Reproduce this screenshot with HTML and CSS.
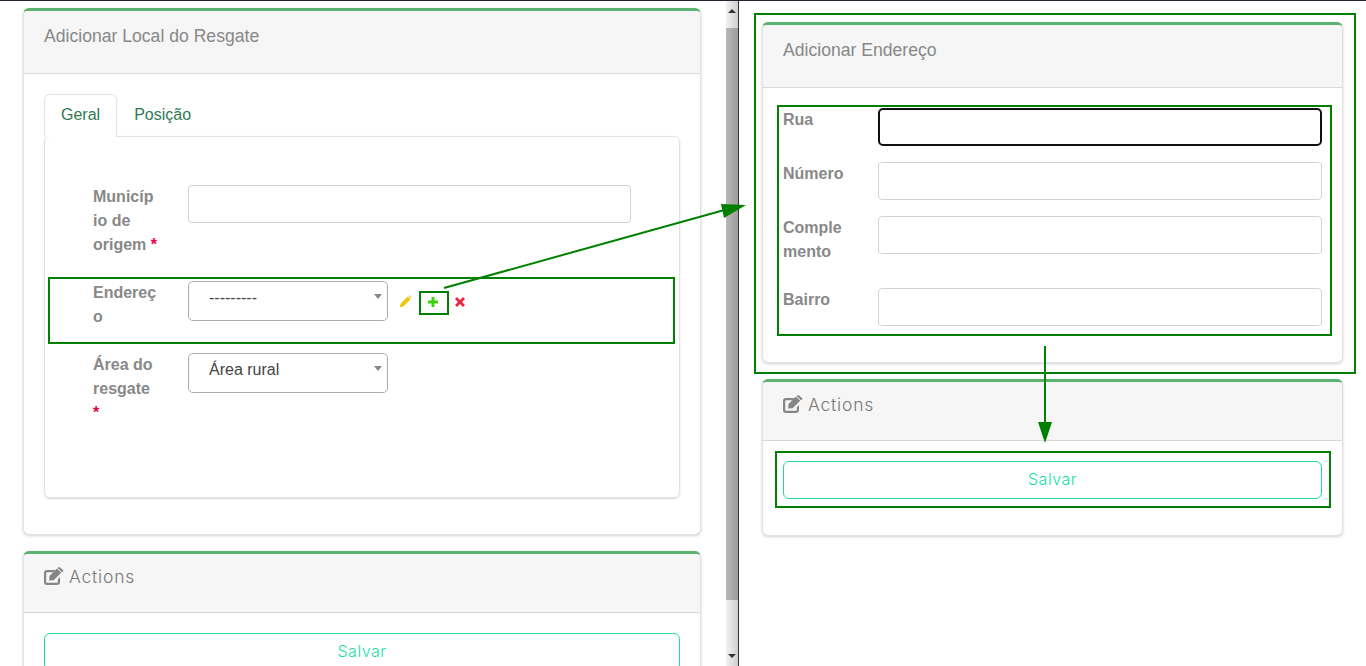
FILE: index.html

```html
<!DOCTYPE html>
<html lang="pt-BR">
<head>
    <meta charset="UTF-8">
    <title>Adicionar Local do Resgate</title>
    <link rel="stylesheet" href="styles.css">
</head>
<body>
    <div class="page">
        <div class="pane-left">
            <div class="left-content">
                <section class="card">
                    <div class="card-header card-header-big"><h3>Adicionar Local do Resgate</h3></div>
                    <div class="card-body">
                        <ul class="tabs">
                            <li class="tab active">Geral</li>
                            <li class="tab">Posição</li>
                        </ul>
                        <div class="tab-content">
                            <div class="form-row">
                                <label>Município de origem <span class="req">*</span></label>
                                <input type="text" class="field">
                            </div>
                            <div class="form-row">
                                <label>Endereço</label>
                                <div class="select-line">
                                    <div class="select"><span>---------</span><i class="caret"></i></div>
                                    <div class="row-icons">
                                        <svg class="icon-pencil" viewBox="0 0 14 14"><path d="M.8 13.200l.9-3.900L9.400 1.600l3 3-7.700 7.700zM10.300.8a1 1 0 0 1 1.400 0l1.500 1.500a1 1 0 0 1 0 1.400l-.2.100-2.900-2.900z" fill="#e8c80c"/></svg>
                                        <svg class="icon-plus" viewBox="0 0 12 12"><path d="M4.500 1h3v3.500H11v3H7.500V11h-3V7.500H1v-3h3.500z" fill="#3fd20a"/></svg>
                                        <svg class="icon-times" viewBox="0 0 12 12"><path d="M3 1l3 3 3-3 2 2-3 3 3 3-2 2-3-3-3 3-2-2 3-3-3-3z" fill="#e8263f"/></svg>
                                    </div>
                                </div>
                            </div>
                            <div class="form-row">
                                <label>Área do resgate <span class="req">*</span></label>
                                <div class="select"><span>Área rural</span><i class="caret"></i></div>
                            </div>
                        </div>
                    </div>
                </section>
                <section class="card">
                    <div class="card-header card-header-small">
                        <svg class="icon-edit" viewBox="0 0 20 18"><path d="M11.500 3H3A3 3 0 0 0 0 6v9a3 3 0 0 0 3 3h10a3 3 0 0 0 3-3v-5l-2.200 2.200V15a.8.8 0 0 1-.8.8H3a.8.8 0 0 1-.8-.8V6a.8.8 0 0 1 .8-.8h6.300z" fill="#858585"/><path d="M5.500 9L13 1.500l4.200 4.200L9.700 13.200l-4.500.4zM14.300.5a1.200 1.200 0 0 1 1.700 0L18.900 3a1.200 1.200 0 0 1 0 1.700L18 5.300 13.700 1z" fill="#858585"/></svg>
                        <h4>Actions</h4>
                    </div>
                    <div class="card-body">
                        <button class="save">Salvar</button>
                    </div>
                </section>
            </div>
            <div class="scrollbar">
                <i class="arrow-up"></i>
                <div class="thumb"></div>
                <i class="arrow-down"></i>
            </div>
        </div>

        <div class="pane-right">
            <section class="card">
                <div class="card-header card-header-big"><h3>Adicionar Endereço</h3></div>
                <div class="card-body card-body-form">
                    <div class="form-row">
                        <label>Rua</label>
                        <input type="text" class="field focused">
                    </div>
                    <div class="form-row">
                        <label>Número</label>
                        <input type="text" class="field">
                    </div>
                    <div class="form-row">
                        <label>Complemento</label>
                        <input type="text" class="field">
                    </div>
                    <div class="form-row">
                        <label>Bairro</label>
                        <input type="text" class="field">
                    </div>
                </div>
            </section>
            <section class="card">
                <div class="card-header card-header-small">
                    <svg class="icon-edit" viewBox="0 0 20 18"><path d="M11.500 3H3A3 3 0 0 0 0 6v9a3 3 0 0 0 3 3h10a3 3 0 0 0 3-3v-5l-2.200 2.200V15a.8.8 0 0 1-.8.8H3a.8.8 0 0 1-.8-.8V6a.8.8 0 0 1 .8-.8h6.300z" fill="#858585"/><path d="M5.500 9L13 1.500l4.200 4.200L9.700 13.200l-4.500.4zM14.300.5a1.200 1.200 0 0 1 1.700 0L18.900 3a1.200 1.200 0 0 1 0 1.700L18 5.300 13.700 1z" fill="#858585"/></svg>
                    <h4>Actions</h4>
                </div>
                <div class="card-body">
                    <button class="save">Salvar</button>
                </div>
            </section>
        </div>

        <!-- green marks drawn over the screenshot -->
        <svg class="marks" viewBox="0 0 1366 666">
            <g fill="none" stroke="#008000" stroke-width="2">
                <rect x="49" y="278" width="625" height="65"/>
                <rect x="420" y="292" width="28" height="22"/>
                <rect x="755" y="14" width="600" height="359"/>
                <rect x="778" y="106" width="553" height="229"/>
                <rect x="776" y="452" width="554" height="55"/>
                <path d="M444 288L728 209"/>
                <path d="M1045 346V424"/>
            </g>
            <path d="M746 205L724 218L721 204z" fill="#008000"/>
            <path d="M1045 443L1038 422H1052z" fill="#008000"/>
        </svg>
    </div>
</body>
</html>
```

FILE: styles.css

```css
* {
    box-sizing: border-box;
}

html, body {
    margin: 0;
    height: 100%;
    overflow: hidden;
    background: #fff;
}

body {
    font-family: "Liberation Sans", Arial, sans-serif;
    font-size: 16px;
    color: #444;
}

.page {
    position: relative;
    display: flex;
    height: 666px;
    border-top: 1px solid #1f2430;
}

/* left side */
.pane-left {
    display: flex;
    width: 739px;
    flex-shrink: 0;
    border-right: 1px solid #333;
    overflow: hidden;
}

.left-content {
    width: 726px;
    flex-shrink: 0;
    padding: 7px 25px 0 23px;
}

.scrollbar {
    display: flex;
    flex-direction: column;
    align-items: center;
    width: 12px;
    background: linear-gradient(to right, #f2f2f2, #cfcfcf);
}

.thumb {
    width: 100%;
    height: 572px;
    background: linear-gradient(to right, #b8b8b8, #9c9c9c);
}

.arrow-up, .arrow-down {
    width: 0;
    height: 0;
    border-left: 4px solid transparent;
    border-right: 4px solid transparent;
}

.arrow-up {
    border-bottom: 4px solid #333;
    margin: 8px 0 15px;
}

.arrow-down {
    border-top: 4px solid #333;
    margin-top: 54px;
}

/* right side */
.pane-right {
    flex-grow: 1;
    padding: 21px 23px 0 23px;
}

/* cards */
.card {
    background: #fff;
    border: 1px solid #e2e2e2;
    border-top: 3px solid #5cb270;
    border-radius: 6px;
    box-shadow: 0 1px 3px rgba(0, 0, 0, 0.18);
    margin-bottom: 16px;
}

.card-header {
    display: flex;
    align-items: flex-start;
    background: #f6f6f6;
    border-bottom: 1px solid #d9d9d9;
    padding: 0 20px;
    border-radius: 3px 3px 0 0;
}

.card-header-big {
    height: 63px;
}

.card-header-small {
    height: 59px;
    align-items: center;
    padding-bottom: 14px;
}

.card-header h3 {
    margin: 14px 0 0;
    font-size: 17.6px;
    font-weight: normal;
    line-height: 22px;
    color: #888;
}

.card-header h4 {
    margin: 0;
    font-family: Inter, sans-serif;
    font-size: 17.5px;
    font-weight: 300;
    letter-spacing: 0.8px;
    color: #777;
}

.icon-edit {
    width: 20px;
    height: 18px;
    margin-right: 5px;
}

.card-body {
    padding: 20px 20px 36px;
}

.card-body-form {
    padding-bottom: 20px;
}

/* tabs */
.tabs {
    display: flex;
    list-style: none;
    margin: 0;
    padding: 0;
    position: relative;
    z-index: 1;
}

.tab {
    height: 43px;
    padding: 10px 16px 0;
    line-height: 20px;
    color: #2f7a54;
    border: 1px solid transparent;
    border-bottom: 0;
}

.tab.active {
    background: #fff;
    border-color: #e4e4e4;
    border-radius: 6px 6px 0 0;
}

.tab-content {
    margin-top: -1px;
    padding: 48px;
    border: 1px solid #e2e2e2;
    border-radius: 6px;
    box-shadow: 0 1px 2px rgba(0, 0, 0, 0.16);
}

/* form rows */
.form-row {
    display: grid;
    grid-template-columns: 64.5px 1fr;
    column-gap: 30.5px;
    align-items: start;
}

.form-row label {
    font-weight: bold;
    line-height: 24px;
    color: #888;
    overflow-wrap: anywhere;
    margin-bottom: 24px;
}

.req {
    color: #e6004c;
}

.field {
    display: block;
    width: 100%;
    height: 38px;
    margin-bottom: 16px;
    background: #fff;
    border: 1px solid #ced4da;
    border-radius: 4px;
}

.field.focused {
    border: 2px solid #111;
    border-radius: 5px;
    outline: none;
}

.select-line {
    display: flex;
    align-items: center;
    margin-bottom: 16px;
}

.select {
    display: flex;
    justify-content: space-between;
    width: 200px;
    height: 40px;
    padding: 6px 5px 0 20px;
    line-height: 20px;
    color: #444;
    background: #fff;
    border: 1px solid #aaa;
    border-radius: 5px;
}

.caret {
    width: 0;
    height: 0;
    margin-top: 6px;
    border-left: 4.5px solid transparent;
    border-right: 4.5px solid transparent;
    border-top: 5px solid #888;
}

.row-icons {
    display: flex;
    align-items: center;
    height: 18px;
    margin: 1px 0 0 11px;
}

.icon-pencil {
    width: 13px;
    height: 13px;
}

.icon-plus {
    width: 12px;
    height: 12px;
    margin-left: 15px;
}

.icon-times {
    width: 12px;
    height: 12px;
    margin-left: 15px;
}

/* buttons */
.save {
    display: block;
    width: 100%;
    height: 38px;
    padding: 0 0 2px;
    background: #fff;
    border: 1px solid #1fd9a0;
    border-radius: 6px;
    font-family: Inter, sans-serif;
    font-size: 16px;
    font-weight: 300;
    letter-spacing: 0.5px;
    color: #12dfa8;
}

/* annotations */
.marks {
    position: absolute;
    top: -1px;
    left: 0;
    width: 1366px;
    height: 666px;
    pointer-events: none;
}
```
